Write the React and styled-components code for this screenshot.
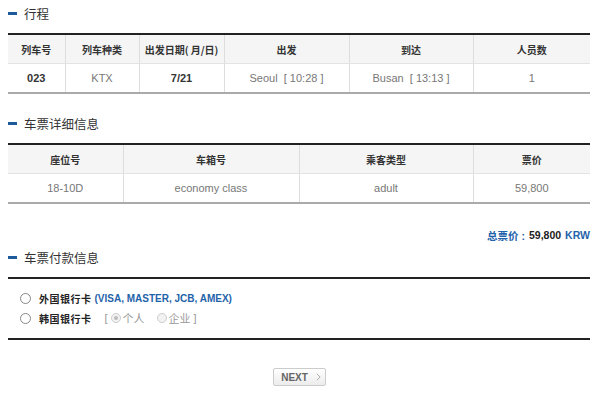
import React from 'react'
import styled, { createGlobalStyle } from 'styled-components'

const GlobalStyle = createGlobalStyle`
body {
    margin: 0;
    background: #fff;
    font-family: "Liberation Sans", Arial, "Noto Sans CJK SC", sans-serif;
}
`

const trip = [
    { w: 57, head: '列车号', value: '023', bold: true },
    { w: 74, head: '列车种类', value: 'KTX' },
    { w: 85, head: '出发日期( 月/日)', value: '7/21', bold: true },
    { w: 125, head: '出发', value: 'Seoul  [ 10:28 ]' },
    { w: 124, head: '到达', value: 'Busan  [ 13:13 ]' },
    { w: 117, head: '人员数', value: '1' },
]

const detail = [
    { w: 115, head: '座位号', value: '18-10D' },
    { w: 176, head: '车箱号', value: 'economy class' },
    { w: 174, head: '乘客类型', value: 'adult' },
    { w: 117, head: '票价', value: '59,800' },
]

const InfoTable = ({ cols }) => (
    <Table>
        <colgroup>
            {cols.map((c, i) => <col key={i} style={{ width: c.w }} />)}
        </colgroup>
        <thead>
            <tr>{cols.map((c, i) => <Th key={i}>{c.head}</Th>)}</tr>
        </thead>
        <tbody>
            <tr>{cols.map((c, i) => <Td key={i} $bold={c.bold}>{c.value}</Td>)}</tr>
        </tbody>
    </Table>
)

const App = () => {
    return (
        <Page>
            <GlobalStyle />
            <SectionTitle>行程</SectionTitle>
            <InfoTable cols={trip} />

            <SectionTitle $top={16}>车票详细信息</SectionTitle>
            <InfoTable cols={detail} />

            <Total>
                <TotalLabel>总票价 :</TotalLabel>
                <TotalValue>59,800</TotalValue>
                <TotalLabel>KRW</TotalLabel>
            </Total>

            <SectionTitle $top={2}>车票付款信息</SectionTitle>
            <PayBox>
                <PayRow>
                    <Radio />
                    <PayLabel>外国银行卡</PayLabel>
                    <CardNames>(VISA, MASTER, JCB, AMEX)</CardNames>
                </PayRow>
                <PayRow>
                    <Radio />
                    <PayLabel>韩国银行卡</PayLabel>
                    <SubChoice>
                        <Bracket>[</Bracket>
                        <MiniRadio $checked />
                        <SubLabel>个人</SubLabel>
                        <MiniRadio />
                        <SubLabel>企业</SubLabel>
                        <Bracket>]</Bracket>
                    </SubChoice>
                </PayRow>
            </PayBox>

            <ButtonRow>
                <NextButton>
                    NEXT
                    <Chevron viewBox="0 0 6 10">
                        <path d="M1 1 L5 5 L1 9" fill="none" stroke="#aaa" strokeWidth="1.2" />
                    </Chevron>
                </NextButton>
            </ButtonRow>
        </Page>
    )
}

export default App

const Page = styled.div`
width: 582px;
padding: 0 10px 0 8px;
`

const SectionTitle = styled.div`
display: flex;
align-items: center;
height: 27px;
margin-top: ${p => p.$top || 0}px;
margin-bottom: 6px;
font-family: "Noto Sans CJK SC", "Liberation Sans", sans-serif;
font-size: 12.5px;
color: #333;

&::before {
    content: '';
    width: 9px;
    height: 3px;
    background: #1d5a9c;
    margin-right: 7px;
}
`

const Table = styled.table`
width: 582px;
table-layout: fixed;
border-collapse: collapse;
border-top: 2px solid #222;
border-bottom: 2px solid #aaa;
`

const Th = styled.th`
height: 28px;
padding: 0;
background: #f5f5f5;
border-left: 1px solid #ddd;
border-bottom: 1px solid #e3e3e3;
font-family: "Noto Sans CJK SC", "Liberation Sans", sans-serif;
font-size: 10px;
font-weight: bold;
color: #333;
text-align: center;

&:first-child {
    border-left: none;
}
`

const Td = styled.td`
height: 28px;
padding: 0;
border-left: 1px solid #ddd;
font-size: 11px;
font-weight: ${p => (p.$bold ? 'bold' : 'normal')};
color: ${p => (p.$bold ? '#333' : '#777')};
text-align: center;
white-space: pre;

&:first-child {
    border-left: none;
}
`

const Total = styled.div`
display: flex;
justify-content: flex-end;
align-items: center;
gap: 4px;
height: 14px;
margin-top: 24px;
font-size: 10.5px;
font-weight: bold;
`

const TotalLabel = styled.span`
font-family: "Liberation Sans", "Noto Sans CJK SC", sans-serif;
color: #1f63aa;
`

const TotalValue = styled.span`
color: #222;
`

const PayBox = styled.div`
border-top: 2px solid #222;
border-bottom: 2px solid #222;
padding: 9px 0 10px 12px;
`

const PayRow = styled.div`
display: flex;
align-items: center;
height: 20px;
font-size: 10px;
font-weight: bold;
`

const Radio = styled.span`
width: 9px;
height: 9px;
border: 1px solid #888;
border-radius: 50%;
background: #fff;
margin-right: 8px;
`

const PayLabel = styled.span`
font-family: "Noto Sans CJK SC", sans-serif;
color: #222;
letter-spacing: 0.5px;
margin-right: 3px;
`

const CardNames = styled.span`
color: #1f63aa;
`

const SubChoice = styled.span`
display: flex;
align-items: center;
margin-left: 7px;
font-weight: normal;
color: #999;
`

const Bracket = styled.span`
margin: 0 3px;
font-size: 11px;
`

const MiniRadio = styled.span`
position: relative;
width: 8px;
height: 8px;
border: 1px solid #ccc;
border-radius: 50%;
background: #f2f2f2;
margin-right: 2px;

&::after {
    content: '';
    display: ${p => (p.$checked ? 'block' : 'none')};
    position: absolute;
    left: 2px;
    top: 2px;
    width: 4px;
    height: 4px;
    border-radius: 50%;
    background: #bbb;
}
`

const SubLabel = styled.span`
font-family: "Noto Sans CJK SC", sans-serif;
font-size: 11px;
margin-right: 12px;

&:nth-last-child(2) {
    margin-right: 0;
}
`

const ButtonRow = styled.div`
display: flex;
justify-content: center;
padding-top: 28px;
`

const NextButton = styled.button`
display: flex;
align-items: center;
justify-content: center;
gap: 8px;
width: 53px;
height: 18px;
padding: 0 0 0 4px;
border: 1px solid #ccc;
border-radius: 2px;
background: linear-gradient(#fff, #ececec);
font-family: "Liberation Sans", sans-serif;
font-size: 10px;
font-weight: bold;
color: #666;
`

const Chevron = styled.svg`
width: 5px;
height: 8px;
`
